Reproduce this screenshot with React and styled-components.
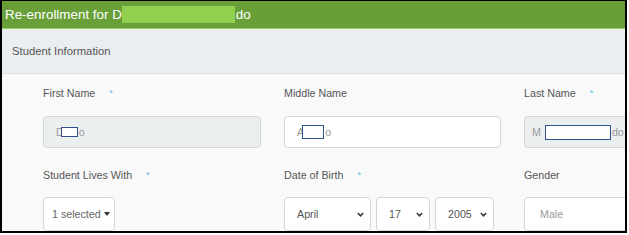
import React from "react";
import styled, { createGlobalStyle } from "styled-components";

const GlobalStyle = createGlobalStyle`
  html, body {
    margin: 0;
    padding: 0;
    background: #fff;
  }
  body {
    font-family: "Liberation Sans", Arial, sans-serif;
  }
`;

const Frame = styled.div`
  box-sizing: border-box;
  width: 627px;
  height: 233px;
  border: 2px solid #000;
  border-top-width: 1px;
  overflow: hidden;
  background: #f9f9f9;
  display: flex;
  flex-direction: column;
`;

const Header = styled.div`
  height: 27px;
  background: #689f38;
  border-bottom: 1px solid #9ccc65;
  color: #fff;
  font-size: 13.4px;
  display: flex;
  align-items: center;
  padding-left: 3px;
  white-space: nowrap;
  flex-shrink: 0;
`;

const HeaderMask = styled.span`
  display: inline-block;
  width: 113px;
  height: 17px;
  background: #92d050;
  margin: 0 1px 0 0;
`;

const SectionBar = styled.div`
  height: 44px;
  background: #ebeef0;
  border-bottom: 1px solid #dde1e3;
  color: #555;
  font-size: 11.3px;
  display: flex;
  align-items: center;
  padding-left: 10px;
  flex-shrink: 0;
`;

const Body = styled.div`
  padding: 12px 0 0 41px;
  display: flex;
  flex-direction: column;
  gap: 20px;
`;

const Row = styled.div`
  display: grid;
  grid-template-columns: 218px 217px 218px;
  column-gap: 23px;
`;

const Field = styled.div`
  display: flex;
  flex-direction: column;
  min-width: 0;
`;

const Label = styled.div`
  font-size: 10.7px;
  line-height: 14px;
  color: #555;
  margin-bottom: ${({ $gap }) => $gap || 16}px;
  white-space: nowrap;
`;

const Star = styled.span`
  color: #5bc0de;
  font-size: 9px;
  margin-left: 14px;
  vertical-align: 1px;
`;

const TextBox = styled.div`
  box-sizing: border-box;
  height: ${({ $h }) => $h || 32}px;
  width: 100%;
  border: 1px solid #d2d6d8;
  border-radius: 4px;
  background: ${({ $disabled }) => ($disabled ? "#eceff0" : "#fff")};
  color: #999;
  font-size: 10.7px;
  display: flex;
  align-items: center;
  padding-left: ${({ $pad }) => $pad || 12}px;
  white-space: nowrap;
`;

const Mask = styled.span`
  display: inline-block;
  box-sizing: border-box;
  width: ${({ $w }) => $w}px;
  height: ${({ $h }) => $h}px;
  border: 1.5px solid #2f4f8f;
  background: #fff;
  margin: 0 ${({ $mr }) => $mr || 0}px 0 ${({ $ml }) => $ml || 0}px;
`;

const DropButton = styled.div`
  box-sizing: border-box;
  width: 72px;
  height: 34px;
  border: 1px solid #d2d6d8;
  border-radius: 4px;
  background: #fff;
  color: #666;
  font-size: 10.7px;
  display: flex;
  align-items: center;
  padding-left: 8px;
  gap: 3px;
`;

const Caret = styled.span`
  width: 0;
  height: 0;
  border-left: 3.5px solid transparent;
  border-right: 3.5px solid transparent;
  border-top: 4px solid #333;
`;

const DateGroup = styled.div`
  display: flex;
  gap: 5px;
`;

const Select = styled.div`
  box-sizing: border-box;
  width: ${({ $w }) => $w}px;
  height: 34px;
  border: 1px solid #d2d6d8;
  border-radius: 4px;
  background: #fff;
  color: #555;
  font-size: 10.7px;
  display: flex;
  align-items: center;
  justify-content: space-between;
  padding: 0 6px 0 12px;
`;

const Chevron = () => (
  <svg width="7" height="5" viewBox="0 0 7 5">
    <path d="M0.8 1 L3.5 3.8 L6.2 1" fill="none" stroke="#333" strokeWidth="1.5" />
  </svg>
);

export default function App() {
  return (
    <>
      <GlobalStyle />
      <Frame>
        <Header>
          Re-enrollment for D<HeaderMask />do
        </Header>
        <SectionBar>Student Information</SectionBar>
        <Body>
          <Row>
            <Field>
              <Label>
                First Name<Star>*</Star>
              </Label>
              <TextBox $disabled>
                D<Mask $w={17} $h={10} $ml={-3} $mr={1} />o
              </TextBox>
            </Field>
            <Field>
              <Label>Middle Name</Label>
              <TextBox>
                A<Mask $w={22} $h={14} $ml={-2} $mr={1} />o
              </TextBox>
            </Field>
            <Field>
              <Label>
                Last Name<Star>*</Star>
              </Label>
              <TextBox $disabled $pad={7}>
                M<Mask $w={66} $h={15} $ml={4} $mr={1} />do
              </TextBox>
            </Field>
          </Row>
          <Row>
            <Field>
              <Label $gap={15}>
                Student Lives With<Star>*</Star>
              </Label>
              <DropButton>
                1 selected <Caret />
              </DropButton>
            </Field>
            <Field>
              <Label $gap={15}>
                Date of Birth<Star>*</Star>
              </Label>
              <DateGroup>
                <Select $w={87}>
                  April
                  <Chevron />
                </Select>
                <Select $w={54}>
                  17
                  <Chevron />
                </Select>
                <Select $w={59}>
                  2005
                  <Chevron />
                </Select>
              </DateGroup>
            </Field>
            <Field>
              <Label $gap={15}>Gender</Label>
              <TextBox $pad={15} $h={34}>
                Male
              </TextBox>
            </Field>
          </Row>
        </Body>
      </Frame>
    </>
  );
}
